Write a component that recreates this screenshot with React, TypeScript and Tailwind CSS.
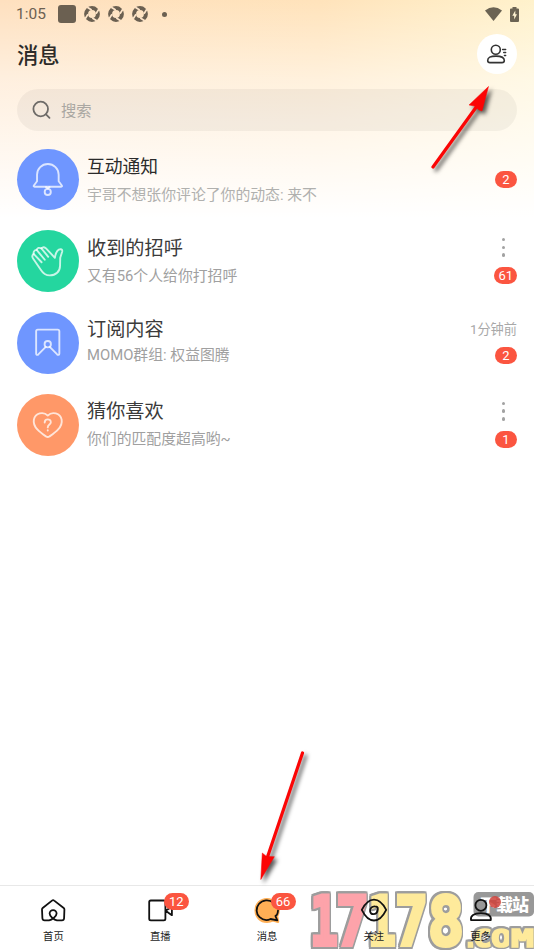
import type { ReactNode } from "react";

interface Conversation {
  title: string;
  preview: string;
  badge: string;
  time?: string;
  menu?: boolean;
  color: string;
  titleClass: string;
  previewClass: string;
  badgeClass: string;
  icon: ReactNode;
}

const conversations: Conversation[] = [
  {
    title: "互动通知",
    preview: "宇哥不想张你评论了你的动态: 来不",
    badge: "2",
    color: "bg-[#6f96ff]",
    titleClass: "pt-[15px] text-[17.8px] text-[#2b2b2b]",
    previewClass: "pt-[4px] text-[#b0b0ae]",
    badgeClass: "mt-[32px]",
    icon: (
      <>
        <path d="M20.2 32.5V26a10.9 10.9 0 0 1 21.8 0v6.5l3.2 4.3q.7 1.2-.7 1.2H17.7q-1.4 0-.7-1.2z" />
        <path d="M29.2 38.4 31 39.8l1.8-1.4" />
        <circle cx="31" cy="43.3" r="3.1" />
      </>
    ),
  },
  {
    title: "收到的招呼",
    preview: "又有56个人给你打招呼",
    badge: "61",
    menu: true,
    color: "bg-[#24d69f]",
    titleClass: "pt-[15px] text-[19.2px] text-[#3b3b3b]",
    previewClass: "pt-[3px] text-[#a0a0a0]",
    badgeClass: "mt-[10px]",
    icon: (
      <>
        <path d="M38.2 28 29 18.300q-2.400-2-4.400.2-3.600-1.600-4.800 1.600-3.600.6-3 4-2.400 2-.6 4.600l7.600 11.100q3.700 6 9.200 6c6 0 10.400-3.800 10.400-9.800l.2-8 2-6.400q.3-2-1.600-2.200c-3.500-.1-5 3.600-5.800 8.600z" />
        <path d="m24.600 18.500 6.900 8.500M19.800 20.100 28 30M16.800 24.100l8 8.400" />
      </>
    ),
  },
  {
    title: "订阅内容",
    preview: "MOMO群组: 权益图腾",
    badge: "2",
    time: "1分钟前",
    color: "bg-[#6f96ff]",
    titleClass: "pt-[14px] text-[19.2px] text-[#3b3b3b]",
    previewClass: "pt-[1px] text-[#a0a0a0]",
    badgeClass: "mt-[8px]",
    icon: (
      <>
        <path d="m29 35.200-7.500 7.600c-1 .900-2.200.4-2.200-1V19.500c0-1.100.6-1.700 1.700-1.700h20c1.100 0 1.700.6 1.700 1.700v22.300c0 1.400-1.200 1.900-2.200 1L33 35.200" />
        <circle cx="31" cy="32.500" r="3.200" />
      </>
    ),
  },
  {
    title: "猜你喜欢",
    preview: "你们的匹配度超高哟~",
    badge: "1",
    menu: true,
    color: "bg-[#ff9868]",
    titleClass: "pt-[14px] text-[19.2px] text-[#3b3b3b]",
    previewClass: "pt-[3px] text-[#a0a0a0]",
    badgeClass: "mt-[10px]",
    icon: (
      <>
        <path d="M31 21.800c-4.300-4.600-12.700-2.600-14 4-1.400 8 7.300 13.600 12.300 17 1.300.9 2.100.9 3.400 0 5-3.400 13.700-9 12.300-17-1.300-6.600-9.700-8.600-14-4z" />
        <path d="M27.900 28.700c.1-4.200 6.200-4 6.200-.3 0 2.500-3.100 2.200-3.100 5.300M31 36.600v.2" />
      </>
    ),
  },
];

function Badge({ children, className = "" }: { children: ReactNode; className?: string }) {
  return (
    <span
      className={`flex h-[17px] min-w-[22px] items-center justify-center rounded-full bg-[#fb5540] px-[4px] text-[13px] leading-none text-white ${className}`}
    >
      {children}
    </span>
  );
}

function ApertureIcon() {
  return (
    <svg className="size-4" viewBox="0 0 16 16">
      <circle cx="8" cy="8" r="5.900" fill="none" stroke="#6b6051" strokeWidth="4" />
      <path
        d="M3.300 1.200 7.700 4M14.800 3.300 12 7.700M12.700 14.800 8.300 12M1.200 12.700 4 8.300"
        stroke="#fee5c9"
        strokeWidth="1.700"
      />
    </svg>
  );
}

function StatusBar() {
  return (
    <div className="flex h-7 items-center pl-[16px] pr-[15px] text-[#6b6051]">
      <span className="w-[42px] pt-[2px] text-[15.500px] leading-none">1:05</span>
      <span className="size-[17.500px] rounded-[3px] bg-[#6b6051]" />
      <span className="ml-[8px] flex gap-[8.400px]">
        <ApertureIcon />
        <ApertureIcon />
        <ApertureIcon />
      </span>
      <span className="ml-[14px] size-[5px] rounded-full bg-[#6b6051]" />
      <svg className="ml-auto h-[14px] w-[17px]" viewBox="0 0 17 14" fill="#6b6353">
        <path d="M0 3.500Q8.500-3 17 3.500L8.500 14z" />
      </svg>
      <svg className="ml-[8px] h-[15px] w-[9px]" viewBox="0 0 9 15">
        <path d="M2.500 0h4v1.500H8q1 0 1 1V14q0 1-1 1H1q-1 0-1-1V2.500q0-1 1-1h1.500z" fill="#6b6353" />
        <path d="M5.300 3.500 2.300 8.700h1.900v3.800l2.800-5.300H5.300z" fill="#fff3d2" />
      </svg>
    </div>
  );
}

function ConversationRow({ item }: { item: Conversation }) {
  return (
    <li className="flex h-[81.900px] pl-[17px] pr-[17px]">
      <div className={`mt-[9.500px] size-[61.500px] shrink-0 rounded-full ${item.color}`}>
        <svg
          viewBox="0 0 62 62"
          fill="none"
          stroke="#fff"
          strokeOpacity=".75"
          strokeWidth="1.900"
          strokeLinecap="round"
          strokeLinejoin="round"
        >
          {item.icon}
        </svg>
      </div>
      <div className="ml-[8.500px] min-w-0 flex-1 whitespace-nowrap">
        <div className={`leading-[26px] ${item.titleClass}`}>{item.title}</div>
        <div className={`text-[14.850px] leading-[22px] ${item.previewClass}`}>{item.preview}</div>
      </div>
      <div className="flex w-[60px] flex-col items-end">
        {item.menu && (
          <div className="mr-[12px] mt-[17px] flex h-[19px] flex-col justify-between">
            <i className="size-[3.500px] rounded-full bg-[#a2a2a2]" />
            <i className="size-[3.500px] rounded-full bg-[#a2a2a2]" />
            <i className="size-[3.500px] rounded-full bg-[#a2a2a2]" />
          </div>
        )}
        {item.time && (
          <span className="mt-[18px] whitespace-nowrap text-[13.200px] leading-[18px] text-[#a8a8a8]">{item.time}</span>
        )}
        <Badge className={item.badgeClass}>{item.badge}</Badge>
      </div>
    </li>
  );
}

const tabs: { label: string; badge?: string; icon: ReactNode }[] = [
  {
    label: "首页",
    icon: (
      <path d="M18 21.300c-2.500-.5-7.400-3.500-7.400-6.700a3.500 3.500 0 0 1 7 0c0 3.200-5.100 6.200-7.600 6.700H5.600c-1.500 0-2.100-.6-2.200-2.100L3 10.500Q3 9.600 3.700 9L13 1.600q1.100-.9 2.200 0L24.700 9q.7.6.7 1.500l-.3 8.700c-.1 1.500-.7 2.100-2.200 2.100z" />
    ),
  },
  {
    label: "直播",
    badge: "12",
    icon: (
      <path d="M4.800 1.500h13c1.200 0 1.600.4 1.600 1.600v16.600c0 1.200-.4 1.600-1.600 1.600h-13c-1.200 0-1.600-.4-1.600-1.600V3.100c0-1.200.4-1.600 1.600-1.600zM19.600 11.700l6.300-4v8.500z" />
    ),
  },
  {
    label: "消息",
    badge: "66",
    icon: (
      <>
        <path
          d="M14 .3C7.500.3 2.700 5.100 2.700 11.500S7.500 22.700 14 22.700c2 0 4-.4 5.700-1.300l5.300 1.300-1-5.600c1-1.700 1.600-3.400 1.600-5.600C25.600 5.100 20.500.3 14 .3z"
          fill="#ffaf55"
          stroke="#ffaf55"
          strokeWidth="2.500"
        />
        <path d="M20.500 3.700C16-.1 9.500.8 5.900 5c-3.300 4-3 9.800.7 13.200 3.200 2.900 7.300 3.600 11 1.800l6.700 1.300-1.900-4.300 1.300-.9c.7-1.300 1.300-3 1.300-4.600" />
      </>
    ),
  },
  {
    label: "关注",
    icon: (
      <>
        <path d="M1.800 10.900C5.500 3.700 9.500.7 14 .7s8.500 3 12.200 10.200C22.500 18.500 18.500 21.500 14 21.500S5.500 18.500 1.800 10.900z" />
        <path d="M10.100 12.300c-.4-3 1.900-5 4.800-4.900 2 0 3.100.7 2.900 2.900-.3 3-2 4.900-4.500 4.900-1.700 0-2.900-1-3.200-2.900z" />
      </>
    ),
  },
  {
    label: "更多",
    icon: (
      <>
        <circle cx="13.900" cy="6.300" r="5.500" />
        <path d="M4 21.200c-.8-4.700 3-7 9.900-7s10.700 2.300 9.900 7z" />
      </>
    ),
  },
];

const digits = [
  { char: "1", x: 310, width: 28, color: "#fda3aa" },
  { char: "7", x: 336, width: 33, color: "#fda3aa" },
  { char: "1", x: 368, width: 28, color: "#feea9b" },
  { char: "7", x: 395, width: 33, color: "#feea9b" },
  { char: "8", x: 428, width: 36, color: "#feea9b" },
];

const suffix = [
  { char: ".", x: 463, width: 15 },
  { char: "C", x: 473, width: 19 },
  { char: "O", x: 491, width: 21 },
  { char: "M", x: 511, width: 23 },
];

function Watermark() {
  return (
    <svg className="absolute bottom-0 right-0 h-[64px] w-[226px]" viewBox="308 886 226 64">
      <g fontFamily="'DejaVu Sans Mono','Liberation Mono',monospace" fontWeight="700" strokeLinejoin="miter">
        {digits.map((d) => (
          <text
            key={d.x}
            className="[filter:drop-shadow(1.500px_0_0_#9d9d9d)_drop-shadow(-1.500px_0_0_#9d9d9d)_drop-shadow(0_2px_0_#9d9d9d)_drop-shadow(0_-2px_0_#9d9d9d)]"
            x={d.x}
            y="944.500"
            textLength={d.width}
            lengthAdjust="spacingAndGlyphs"
            fontSize="68"
            fill={d.color}
            stroke={d.color}
            strokeWidth="4"
          >
            {d.char}
          </text>
        ))}
        {suffix.map((s) => (
          <text
            key={s.x}
            className="[filter:drop-shadow(1.500px_0_0_#9d9d9d)_drop-shadow(-1.500px_0_0_#9d9d9d)_drop-shadow(0_1.500px_0_#9d9d9d)_drop-shadow(0_-1.500px_0_#9d9d9d)]"
            x={s.x}
            y="946.500"
            textLength={s.width}
            lengthAdjust="spacingAndGlyphs"
            fontSize="25"
            fill="#feea9b"
            stroke="#feea9b"
            strokeWidth="1.500"
          >
            {s.char}
          </text>
        ))}
      </g>
      <rect x="473.500" y="892" width="60.500" height="24.500" rx="5" fill="#989898" />
      <text x="480" y="911" fontSize="17" fontWeight="900" fill="#fff" textLength="49" fontFamily="'Noto Sans CJK SC',sans-serif">
        下载站
      </text>
      <circle cx="495" cy="902" r="6" fill="#cf3f38" fillOpacity=".85" />
    </svg>
  );
}

function TabBar() {
  return (
    <nav className="relative h-[65px] border-t border-[#e8e8e8] bg-white">
      <Watermark />
      <div className="relative grid h-full grid-cols-5">
        {tabs.map((tab) => (
          <div key={tab.label} className="relative flex flex-col items-center pt-[13px] text-[10.300px] text-[#1c1c1c]">
            <svg
              className="h-[24px] w-[28px] overflow-visible"
              viewBox="0 0 28 24"
              fill="none"
              stroke="#111"
              strokeWidth="1.800"
              strokeLinejoin="round"
              strokeLinecap="round"
            >
              {tab.icon}
            </svg>
            <span className="mt-[6px] leading-[15px]">{tab.label}</span>
            {tab.badge && <Badge className="absolute left-[57px] top-[7px] min-w-[25px]">{tab.badge}</Badge>}
          </div>
        ))}
      </div>
    </nav>
  );
}

// Red pointers drawn over the page, in page coordinates
function Pointers() {
  return (
    <svg className="pointer-events-none absolute inset-0 h-[950px] w-[534px]" viewBox="0 0 534 950">
      <g className="drop-shadow-[3px_3px_2px_rgba(0,0,0,0.65)]" fill="#fb0505" stroke="#fb0505">
        <path d="M433 167 477 106" strokeWidth="3.200" strokeLinecap="round" />
        <path d="m488.500 86.500-19.500 18.500 5.500 1 4.500 4 3 1z" strokeWidth=".5" />
      </g>
      <g className="drop-shadow-[3px_3px_2px_rgba(0,0,0,0.65)]" fill="#fb0505" stroke="#fb0505">
        <path d="m302.500 753-35 104" strokeWidth="3.200" strokeLinecap="round" />
        <path d="m260.800 879.500 1.500-26.500 4.200 3.500 7.800.2z" strokeWidth=".5" />
      </g>
    </svg>
  );
}

export default function App() {
  return (
    <div className="relative flex h-[950px] w-[534px] flex-col overflow-hidden bg-white font-[Roboto,'Noto_Sans_CJK_SC',sans-serif]">
      <div className="flex flex-1 flex-col bg-[linear-gradient(to_bottom,rgba(255,255,255,0)_0px,rgba(255,255,255,0.5)_80px,#fff_218px),linear-gradient(to_right,#fee0bf,#ffe3bb_60%,#fff2cc)]">
        <StatusBar />
        <header className="flex h-[61px] items-start justify-between px-[17px] pt-[6px]">
          <h1 className="mt-[6px] text-[21.300px] font-medium leading-[32px] text-[#2d2b29]">消息</h1>
          <button className="flex size-[40px] items-center justify-center rounded-full bg-white">
            <svg
              className="size-[22px]"
              viewBox="0 0 22 22"
              fill="none"
              stroke="#333"
              strokeWidth="1.600"
              strokeLinecap="round"
              strokeLinejoin="round"
            >
              <circle cx="9.800" cy="6.700" r="4.500" />
              <path d="M1.700 17.500c0-3.200 2.700-4.400 8.300-4.400s8.300 1.200 8.300 4.400c0 1.500-.8 2.100-2.300 2.100H4c-1.500 0-2.300-.6-2.300-2.100z" />
              <path d="M16.600 6.500h3.100M17.700 9.500h2M18.400 12.500h1.300" strokeWidth="1.400" />
            </svg>
          </button>
        </header>
        <div className="mx-[17px] flex h-[42px] items-center rounded-full bg-black/[0.045] pl-[15px]">
          <svg className="size-[20px]" viewBox="0 0 20 20" fill="none" stroke="#6e6b68" strokeWidth="1.800" strokeLinecap="round">
            <circle cx="8.700" cy="9" r="7.300" />
            <path d="m14 14.300 3.500 3.500" />
          </svg>
          <span className="ml-[9px] pt-[2px] text-[15.300px] text-[#aaa7a2]">搜索</span>
        </div>
        <ul className="pt-[8px]">
          {conversations.map((item) => (
            <ConversationRow key={item.title} item={item} />
          ))}
        </ul>
      </div>
      <TabBar />
      <Pointers />
    </div>
  );
}
